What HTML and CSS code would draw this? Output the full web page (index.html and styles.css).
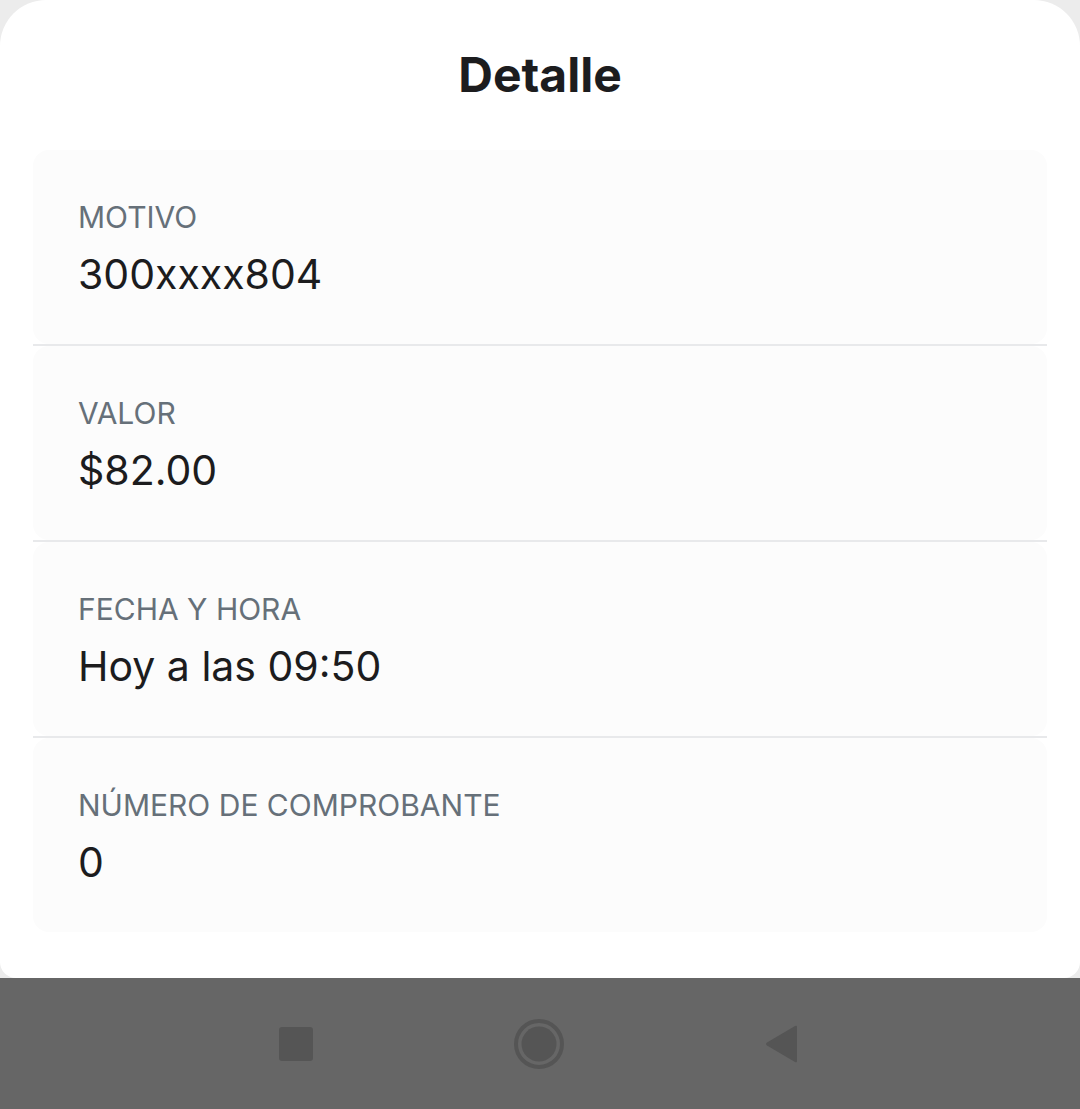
FILE: index.html
```html
<!DOCTYPE html>
<html lang="es">
<head>
<meta charset="utf-8">
<title>Detalle</title>
<link rel="stylesheet" href="styles.css">
</head>
<body>
<div class="screen">
  <main class="sheet">
    <h1 class="title">Detalle</h1>
    <section class="list">
      <div class="item">
        <div class="label">MOTIVO</div>
        <div class="value">300xxxx804</div>
      </div>
      <div class="divider"></div>
      <div class="item">
        <div class="label">VALOR</div>
        <div class="value">$82.00</div>
      </div>
      <div class="divider"></div>
      <div class="item">
        <div class="label">FECHA Y HORA</div>
        <div class="value">Hoy a las 09:50</div>
      </div>
      <div class="divider"></div>
      <div class="item">
        <div class="label">NÚMERO DE COMPROBANTE</div>
        <div class="value">0</div>
      </div>
    </section>
  </main>
  <nav class="navbar">
    <div class="nav-btn">
      <svg width="36" height="36" viewBox="0 0 36 36"><rect x="1" y="1" width="34" height="34" rx="3" fill="#555555"/></svg>
    </div>
    <div class="nav-btn">
      <svg width="52" height="52" viewBox="0 0 52 52"><circle cx="26" cy="26" r="23" fill="none" stroke="#555555" stroke-width="4"/><circle cx="26" cy="26" r="17.5" fill="#555555"/></svg>
    </div>
    <div class="nav-btn">
      <svg width="36" height="40" viewBox="0 0 36 40"><path d="M33 3 L33 37 Q33 39 31 38 L3 21.5 Q1 20 3 18.5 L31 2 Q33 1 33 3 Z" fill="#555555"/></svg>
    </div>
  </nav>
</div>
</body>
</html>
```

FILE: styles.css
```css
* {
  box-sizing: border-box;
}

html, body {
  margin: 0;
  padding: 0;
}

body {
  background: #ececec;
  font-family: Inter, "Noto Sans", "Liberation Sans", sans-serif;
  width: 1080px;
  height: 1109px;
  overflow: hidden;
}

.screen {
  display: flex;
  flex-direction: column;
  height: 1109px;
}

.sheet {
  height: 978px;
  background: #ffffff;
  border-radius: 46px 46px 16px 16px;
  padding: 47px 33px 0 33px;
  display: flex;
  flex-direction: column;
}

.title {
  margin: 0 0 47px 0;
  font-size: 48px;
  line-height: 56px;
  font-weight: 700;
  color: #1c1c1e;
  text-align: center;
}

.list {
  display: flex;
  flex-direction: column;
}

.item {
  height: 194px;
  background: #fcfcfc;
  border-radius: 16px;
  padding: 49px 45px 0 45px;
}

.divider {
  height: 2px;
  background: #e8e9eb;
}

.label {
  font-size: 30px;
  line-height: 36px;
  color: #667079;
}

.value {
  margin-top: 15px;
  font-size: 41px;
  line-height: 48px;
  color: #1c1c1e;
}

.navbar {
  flex: 1;
  background: #666666;
  display: flex;
  align-items: center;
  justify-content: space-between;
  padding: 0 280px 0 278px;
}

.nav-btn {
  display: flex;
  align-items: center;
  justify-content: center;
}

.nav-btn svg {
  display: block;
}
```
